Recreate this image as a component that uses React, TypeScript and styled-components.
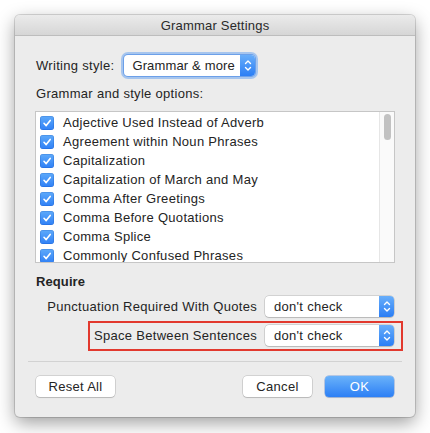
import React from "react";
import styled, { createGlobalStyle } from "styled-components";

const Global = createGlobalStyle`
  html, body { margin: 0; padding: 0; background: #ffffff; }
  body { font-family: "Liberation Sans", Arial, sans-serif; font-size: 13px; color: #242424; }
`;

const Page = styled.div`
  width: 430px;
  height: 433px;
  padding: 15px;
  box-sizing: border-box;
`;

const Window = styled.div`
  width: 400px;
  height: 402px;
  background: #ececec;
  border-radius: 5px;
  box-shadow: 0 0 0 1px rgba(0, 0, 0, 0.14), 0 6px 18px rgba(0, 0, 0, 0.38);
  display: flex;
  flex-direction: column;
  overflow: hidden;
`;

const TitleBar = styled.div`
  height: 21px;
  border-bottom: 1px solid #bdbdbd;
  background: linear-gradient(#ebebeb, #d6d6d6);
  display: flex;
  align-items: center;
  justify-content: center;
  font-size: 13px;
  letter-spacing: 0.2px;
  color: #2a2a2a;
`;

const Content = styled.div`
  display: flex;
  flex-direction: column;
  padding: 17px 20px 20px;
  letter-spacing: 0.3px;
`;

const StyleRow = styled.div`
  height: 24px;
  display: flex;
  align-items: center;
  gap: 10px;
  padding-left: 1px;
`;

const Label = styled.div<{ $bold?: boolean; $mt?: number }>`
  line-height: 16px;
  font-weight: ${(p) => (p.$bold ? 700 : 400)};
  letter-spacing: ${(p) => (p.$bold ? 0.1 : 0.3)}px;
  margin-top: ${(p) => p.$mt ?? 0}px;
  padding-left: 1px;
  white-space: nowrap;
`;

const Popup = styled.div<{ $width: number; $focused?: boolean }>`
  width: ${(p) => p.$width}px;
  height: 21px;
  box-sizing: border-box;
  background: #ffffff;
  border-radius: 4px;
  box-shadow: ${(p) =>
    p.$focused
      ? "0 0 0 1px rgba(60,130,230,0.55), 0 0 0 3px rgba(110,165,240,0.55)"
      : "0 0 0 0.5px rgba(0,0,0,0.22), 0 1px 1px rgba(0,0,0,0.12)"};
  display: flex;
  align-items: center;
  overflow: hidden;
`;

const PopupText = styled.span<{ $tight?: boolean }>`
  flex: 1;
  padding-left: ${(p) => (p.$tight ? 8 : 9)}px;
  letter-spacing: ${(p) => (p.$tight ? 0.15 : 0.3)}px;
  white-space: nowrap;
`;

const Stepper = styled.div`
  width: 15px;
  height: 100%;
  background: linear-gradient(#68aefa, #2b7ef5);
  display: flex;
  align-items: center;
  justify-content: center;
`;

const ListBox = styled.div`
  margin-top: 9px;
  height: 152px;
  box-sizing: border-box;
  border: 1px solid #c6c6c6;
  background: #ffffff;
  display: flex;
  overflow: hidden;
`;

const Rows = styled.div`
  flex: 1;
  padding-top: 1px;
`;

const ListRow = styled.div`
  height: 19px;
  display: flex;
  align-items: center;
  padding-left: 4px;
  gap: 9px;
  white-space: nowrap;
`;

const CheckBox = styled.div`
  width: 14px;
  height: 14px;
  border-radius: 3px;
  background: linear-gradient(#5eaafa, #2f80f6);
  box-shadow: inset 0 0 0 0.5px rgba(0, 60, 160, 0.35);
  display: flex;
  align-items: center;
  justify-content: center;
  flex: none;
`;

const ScrollTrack = styled.div`
  width: 15px;
  flex: none;
  background: #fafafa;
  border-left: 1px solid #e6e6e6;
  display: flex;
  justify-content: center;
  padding-top: 2px;
  box-sizing: border-box;
`;

const Thumb = styled.div`
  width: 7px;
  height: 26px;
  border-radius: 4px;
  background: #c2c2c2;
`;

const RequireRow = styled.div<{ $mt: number }>`
  margin-top: ${(p) => p.$mt}px;
  display: flex;
  justify-content: flex-end;
  padding-right: 1px;
`;

const RequireGroup = styled.div<{ $highlight?: boolean }>`
  position: relative;
  display: flex;
  align-items: center;
  gap: 8px;
  &::after {
    content: "";
    display: ${(p) => (p.$highlight ? "block" : "none")};
    position: absolute;
    top: -4px;
    bottom: -5px;
    left: -6px;
    right: -9px;
    border: 2px solid #e2392e;
    pointer-events: none;
  }
`;

const Separator = styled.div`
  margin: 15px -7px 0;
  height: 1px;
  background: #d2d2d2;
`;

const ButtonRow = styled.div`
  margin-top: 14px;
  display: flex;
  align-items: center;
  padding-left: 1px;
  padding-right: 1px;
`;

const Spacer = styled.div`
  flex: 1;
`;

const Button = styled.button<{ $primary?: boolean; $width: number }>`
  width: ${(p) => p.$width}px;
  height: 21px;
  margin-left: ${(p) => (p.$primary ? 13 : 0)}px;
  font-family: inherit;
  font-size: 13px;
  letter-spacing: 0.3px;
  border: none;
  border-radius: 4px;
  padding: 0;
  color: ${(p) => (p.$primary ? "#ffffff" : "#242424")};
  background: ${(p) => (p.$primary ? "linear-gradient(#6ab2fa, #2c7ff5)" : "#ffffff")};
  box-shadow: ${(p) =>
    p.$primary
      ? "0 0 0 0.5px rgba(20,90,200,0.5), 0 1px 1px rgba(0,0,0,0.12)"
      : "0 0 0 0.5px rgba(0,0,0,0.22), 0 1px 1px rgba(0,0,0,0.12)"};
`;

const Chevrons = () => (
  <svg width="8" height="13" viewBox="0 0 8 13" fill="none">
    <path d="M1.5 4.5 L4 2 L6.5 4.5" stroke="#fff" strokeWidth="1.4" strokeLinecap="round" strokeLinejoin="round" />
    <path d="M1.5 8.5 L4 11 L6.5 8.5" stroke="#fff" strokeWidth="1.4" strokeLinecap="round" strokeLinejoin="round" />
  </svg>
);

const Check = () => (
  <svg width="10" height="10" viewBox="0 0 10 10" fill="none">
    <path d="M2 5.3 L4.2 7.6 L8.2 2.4" stroke="#fff" strokeWidth="1.6" strokeLinecap="round" strokeLinejoin="round" />
  </svg>
);

const options = [
  "Adjective Used Instead of Adverb",
  "Agreement within Noun Phrases",
  "Capitalization",
  "Capitalization of March and May",
  "Comma After Greetings",
  "Comma Before Quotations",
  "Comma Splice",
  "Commonly Confused Phrases",
];

export default function App() {
  return (
    <Page>
      <Global />
      <Window>
        <TitleBar>Grammar Settings</TitleBar>
        <Content>
          <StyleRow>
            <span>Writing style:</span>
            <Popup $width={131} $focused>
              <PopupText $tight>Grammar &amp; more</PopupText>
              <Stepper>
                <Chevrons />
              </Stepper>
            </Popup>
          </StyleRow>
          <Label $mt={9}>Grammar and style options:</Label>
          <ListBox>
            <Rows>
              {options.map((o) => (
                <ListRow key={o}>
                  <CheckBox>
                    <Check />
                  </CheckBox>
                  <span>{o}</span>
                </ListRow>
              ))}
            </Rows>
            <ScrollTrack>
              <Thumb />
            </ScrollTrack>
          </ListBox>
          <Label $bold $mt={11}>Require</Label>
          <RequireRow $mt={6}>
            <RequireGroup>
              <span>Punctuation Required With Quotes</span>
              <Popup $width={129}>
                <PopupText>don't check</PopupText>
                <Stepper>
                  <Chevrons />
                </Stepper>
              </Popup>
            </RequireGroup>
          </RequireRow>
          <RequireRow $mt={8}>
            <RequireGroup $highlight>
              <span>Space Between Sentences</span>
              <Popup $width={129}>
                <PopupText>don't check</PopupText>
                <Stepper>
                  <Chevrons />
                </Stepper>
              </Popup>
            </RequireGroup>
          </RequireRow>
          <Separator />
          <ButtonRow>
            <Button $width={79}>Reset All</Button>
            <Spacer />
            <Button $width={69}>Cancel</Button>
            <Button $width={69} $primary>OK</Button>
          </ButtonRow>
        </Content>
      </Window>
    </Page>
  );
}
